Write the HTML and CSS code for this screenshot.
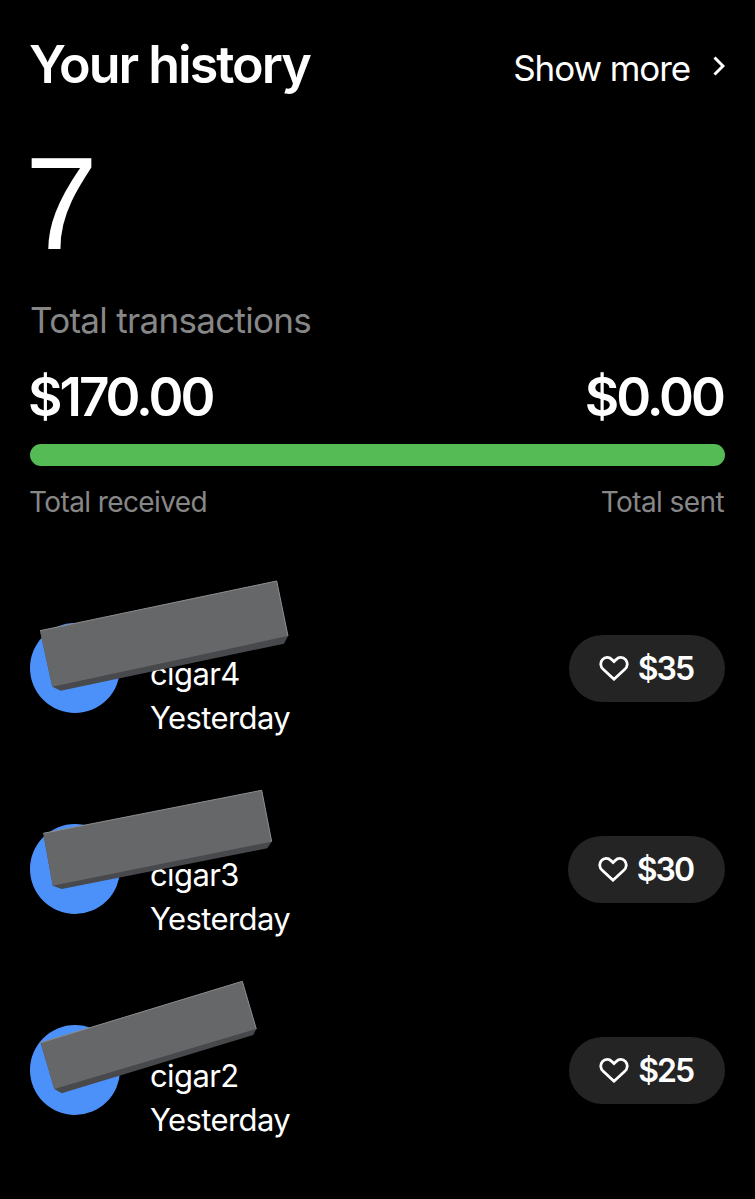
FILE: index.html
```html
<!DOCTYPE html>
<html lang="en">
<head>
    <meta charset="UTF-8">
    <meta name="viewport" content="width=device-width, initial-scale=1.0">
    <title>Your history</title>
    <link rel="stylesheet" href="styles.css">
</head>
<body>
    <header class="header">
        <h1>Your history</h1>
        <a class="more">
            <span>Show more</span>
            <svg width="12" height="20" viewBox="0 0 12 20"><path d="M1.5 1.5l8.5 8.5-8.5 8.5"/></svg>
        </a>
    </header>

    <section class="summary">
        <div class="count">7</div>
        <div class="count-label">Total transactions</div>
        <div class="totals">
            <span>$170.00</span>
            <span class="sent">$0.00</span>
        </div>
        <div class="bar"></div>
        <div class="labels">
            <span>Total received</span>
            <span>Total sent</span>
        </div>
    </section>

    <ul class="list">
        <li class="row">
            <div class="avatar"></div>
            <div class="info">
                <div>cigar4</div>
                <div class="date">Yesterday</div>
            </div>
            <div class="amount">
                <svg class="heart" width="30" height="26" viewBox="0 0 30 26"><path d="M15 24.2L4.2 14.3C1.2 11.6 1 7.4 3.4 4.6 6 1.8 10.2 1.8 12.8 4.4L15 6.6l2.2-2.2c2.6-2.6 6.8-2.6 9.4.2 2.4 2.8 2.2 7-.8 9.7z"/></svg>
                <span>$35</span>
            </div>
            <svg class="cover" width="270" height="130" viewBox="0 0 270 130">
                <polygon class="side" points="10,58.7 246.7,9 258,64 254,71.7 30.7,118.7 22.3,114.7"/>
                <polygon class="face" points="10,58.7 246.7,9 258,64 22.3,114.7"/>
                <path class="edge" d="M10 58.7L246.7 9l11.3 55"/>
            </svg>
        </li>
        <li class="row">
            <div class="avatar"></div>
            <div class="info">
                <div>cigar3</div>
                <div class="date">Yesterday</div>
            </div>
            <div class="amount">
                <svg class="heart" width="30" height="26" viewBox="0 0 30 26"><path d="M15 24.2L4.2 14.3C1.2 11.6 1 7.4 3.4 4.6 6 1.8 10.2 1.8 12.8 4.4L15 6.6l2.2-2.2c2.6-2.6 6.8-2.6 9.4.2 2.4 2.8 2.2 7-.8 9.7z"/></svg>
                <span>$30</span>
            </div>
            <svg class="cover" width="270" height="130" viewBox="0 0 270 130">
                <polygon class="side" points="13.3,60.3 231.7,17.3 241.7,68.7 237.3,75.3 31.7,116 22.7,112.7"/>
                <polygon class="face" points="13.3,60.3 231.7,17.3 241.7,68.7 22.7,112.7"/>
                <path class="edge" d="M13.3 60.3l218.4-43 10 51.4"/>
            </svg>
        </li>
        <li class="row">
            <div class="avatar"></div>
            <div class="info">
                <div>cigar2</div>
                <div class="date">Yesterday</div>
            </div>
            <div class="amount">
                <svg class="heart" width="30" height="26" viewBox="0 0 30 26"><path d="M15 24.2L4.2 14.3C1.2 11.6 1 7.4 3.4 4.6 6 1.8 10.2 1.8 12.8 4.4L15 6.6l2.2-2.2c2.6-2.6 6.8-2.6 9.4.2 2.4 2.8 2.2 7-.8 9.7z"/></svg>
                <span>$25</span>
            </div>
            <svg class="cover" width="270" height="130" viewBox="0 0 270 130">
                <polygon class="side" points="10.7,68.7 212.3,7.3 226.3,55 223.3,61 31.7,119.3 24.3,115"/>
                <polygon class="face" points="10.7,68.7 212.3,7.3 226.3,55 24.3,115"/>
                <path class="edge" d="M10.7 68.7l201.6-61.4 14 47.7"/>
            </svg>
        </li>
    </ul>
</body>
</html>
```
FILE: styles.css
```css
* {
    box-sizing: border-box;
}

body {
    margin: 0;
    padding: 34px 30px 0;
    min-height: 1199px;
    background: #000;
    color: #fff;
    font-family: Inter, 'Liberation Sans', sans-serif;
    white-space: nowrap;
}

.header {
    display: flex;
    justify-content: space-between;
    height: 64px;
}

h1 {
    margin: 0 0 0 -1px;
    font-size: 52px;
    font-weight: 600;
    line-height: 62px;
    letter-spacing: -2px;
}

.more {
    display: flex;
    align-items: center;
    gap: 23px;
    height: 66px;
    padding-top: 2px;
    font-size: 35px;
    line-height: 64px;
    letter-spacing: -1.1px;
}

.more svg {
    margin-top: -4px;
}

.more path {
    fill: none;
    stroke: #fff;
    stroke-width: 3;
}

.count {
    margin-top: 35px;
    margin-left: -5px;
    height: 140px;
    font-family: 'Liberation Sans', Arial, sans-serif;
    font-size: 131px;
    line-height: 141px;
}

.count-label {
    margin-top: 25px;
    height: 46px;
    font-size: 35px;
    line-height: 44px;
    letter-spacing: -0.7px;
    color: #878787;
}

.totals {
    display: flex;
    justify-content: space-between;
    margin: 22px 0 0 -2px;
    height: 60px;
    font-size: 53px;
    font-weight: 600;
    line-height: 63px;
    letter-spacing: -3px;
}

.sent {
    margin-right: -1px;
    padding-right: 3px;
}

.bar {
    margin-top: 18px;
    height: 22px;
    border-radius: 11px;
    background: #55bb55;
}

.labels {
    display: flex;
    justify-content: space-between;
    margin: 17px 1px 0 -1px;
    height: 38px;
    font-size: 28px;
    line-height: 38px;
    letter-spacing: -0.6px;
    color: #878787;
}

.list {
    margin: 81px 0 0;
    padding: 0;
    list-style: none;
}

.row {
    position: relative;
    display: flex;
    align-items: center;
    height: 132px;
    margin-bottom: 69px;
}

.avatar {
    width: 90px;
    height: 90px;
    border-radius: 50%;
    background: #4c91f9;
}

.info {
    margin-left: 30px;
    padding-top: 56px;
    font-size: 31px;
    line-height: 44px;
    letter-spacing: -0.6px;
}

.amount {
    display: flex;
    align-items: center;
    gap: 9px;
    margin-left: auto;
    height: 67px;
    padding: 0 32px 0 30px;
    border-radius: 34px;
    background: #242424;
    font-size: 32px;
    font-weight: 600;
    letter-spacing: -2px;
}

.heart path {
    fill: none;
    stroke: #fff;
    stroke-width: 2.8;
}

/* grey block lying over the name */
.cover {
    position: absolute;
    left: 0;
    top: -30px;
}

.face {
    fill: #666769;
}

.side {
    fill: #48494c;
}

.edge {
    fill: none;
    stroke: #8b8c8e;
    stroke-width: 1;
}
```
